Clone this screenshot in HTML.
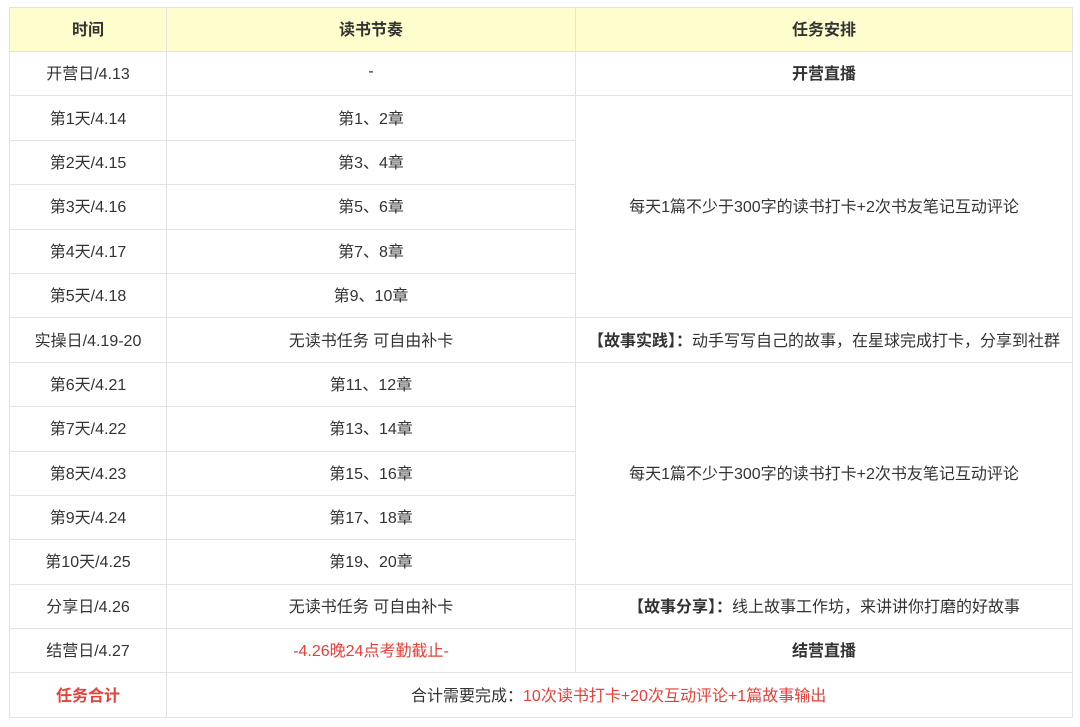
<!DOCTYPE html>
<html><head><meta charset="utf-8"><style>
body{margin:0;background:#fff;width:1080px;height:727px;overflow:hidden;font-family:"Liberation Sans","Noto Sans CJK SC",sans-serif;color:#333;font-size:16px}
table{position:absolute;left:9px;top:7px;border-collapse:collapse;table-layout:fixed;width:1063px}
td{border:1.5px solid #e3e3e3;text-align:center;padding:0 0 3px 0;white-space:nowrap;vertical-align:middle}
tr{height:44.4px}
tr.h td{background:#fefdcd;font-weight:bold}
tr.h{height:44px}
.b{font-weight:bold}
.r{color:#e5403a}
</style></head><body>
<table>
<colgroup><col style="width:157px"><col style="width:409px"><col style="width:497px"></colgroup>
<tr class="h"><td>时间</td><td>读书节奏</td><td>任务安排</td></tr>
<tr><td>开营日/4.13</td><td>-</td><td class="b">开营直播</td></tr>
<tr><td>第1天/4.14</td><td>第1、2章</td><td rowspan="5">每天1篇不少于300字的读书打卡+2次书友笔记互动评论</td></tr>
<tr><td>第2天/4.15</td><td>第3、4章</td></tr>
<tr><td>第3天/4.16</td><td>第5、6章</td></tr>
<tr><td>第4天/4.17</td><td>第7、8章</td></tr>
<tr><td>第5天/4.18</td><td>第9、10章</td></tr>
<tr><td>实操日/4.19-20</td><td>无读书任务 可自由补卡</td><td><b>【故事实践】：</b>动手写写自己的故事，在星球完成打卡，分享到社群</td></tr>
<tr><td>第6天/4.21</td><td>第11、12章</td><td rowspan="5">每天1篇不少于300字的读书打卡+2次书友笔记互动评论</td></tr>
<tr><td>第7天/4.22</td><td>第13、14章</td></tr>
<tr><td>第8天/4.23</td><td>第15、16章</td></tr>
<tr><td>第9天/4.24</td><td>第17、18章</td></tr>
<tr><td>第10天/4.25</td><td>第19、20章</td></tr>
<tr><td>分享日/4.26</td><td>无读书任务 可自由补卡</td><td><b>【故事分享】：</b>线上故事工作坊，来讲讲你打磨的好故事</td></tr>
<tr><td>结营日/4.27</td><td class="r">-4.26晚24点考勤截止-</td><td class="b">结营直播</td></tr>
<tr><td class="b r">任务合计</td><td colspan="2" style="text-align:left;padding-left:244px">合计需要完成：<span class="r">10次读书打卡+20次互动评论+1篇故事输出</span></td></tr>
</table>
</body></html>
